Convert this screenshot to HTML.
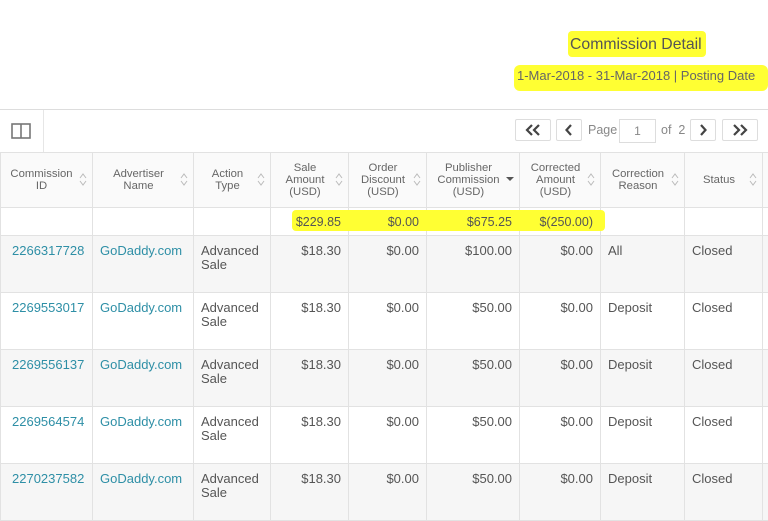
<!DOCTYPE html>
<html><head><meta charset="utf-8"><style>
*{margin:0;padding:0;box-sizing:border-box}
body{width:768px;height:501px;overflow:hidden;background:#fff;font-family:"Liberation Sans",sans-serif;position:relative;color:#555}
.abs{position:absolute}
table{position:absolute;left:0;top:152px;border-collapse:collapse;table-layout:fixed;width:770px}
td,th{border:1px solid #e2e2e2;vertical-align:top;font-size:13px;font-weight:normal;padding:0 7px}
td:first-child{padding-left:11px;padding-right:4px}
th{height:55px;vertical-align:middle;font-size:11.3px;color:#666;text-align:center;position:relative;line-height:12px;padding-right:16px;background:#fafafa}
th:first-child{padding-left:4px;padding-right:14px}
th .s{position:absolute;right:5px;top:19px;width:8px;height:14px}
tr.tot td{height:28px;vertical-align:middle;text-align:right;color:#555;font-size:12.5px}
tr.r td{height:57px;padding-top:8px;line-height:14px}
tr.g td{background:#f6f6f6}
.lk{color:#2e8fa6}
.rt{text-align:right}
.btn{position:absolute;top:119px;height:22px;border:1px solid #ddd;border-radius:2px;background:#fff}
.btn svg{position:absolute;left:50%;top:50%;transform:translate(-50%,-50%)}
</style></head><body>
<div class="abs" style="left:568px;top:31px;width:138px;height:26px;background:#ffff33;border-radius:4px"></div>
<div class="abs" style="left:514px;top:65px;width:254px;height:26px;background:#ffff33;border-radius:6px"></div>
<div class="abs" style="left:570px;top:36px;font-size:15.8px;color:#555">Commission Detail</div>
<div class="abs" style="left:517px;top:68px;font-size:13px;color:#666">1-Mar-2018 - 31-Mar-2018 | Posting Date</div>
<div class="abs" style="left:0;top:109px;width:768px;height:1px;background:#ddd"></div>
<div class="abs" style="left:43px;top:110px;width:1px;height:42px;background:#e6e6e6"></div>
<svg class="abs" style="left:11px;top:123px" width="20" height="16"><rect x="1" y="1" width="18" height="14" fill="none" stroke="#777" stroke-width="1.6"/><line x1="10" y1="1" x2="10" y2="15" stroke="#777" stroke-width="1.6"/></svg>
<div class="btn" style="left:515px;width:36px"><svg width="16" height="12"><path d="M7 1L2 6L7 11M14 1L9 6L14 11" fill="none" stroke="#444" stroke-width="2.2"/></svg></div>
<div class="btn" style="left:556px;width:26px"><svg width="8" height="12"><path d="M6 1L1.5 6L6 11" fill="none" stroke="#444" stroke-width="2.2"/></svg></div>
<div class="abs" style="left:588px;top:123px;font-size:12.5px;color:#888">Page</div>
<div class="abs" style="left:619px;top:119px;width:37px;height:24px;border:1px solid #ddd;font-size:12px;color:#888;text-align:center;line-height:22px">1</div>
<div class="abs" style="left:661px;top:123px;font-size:12.5px;color:#888">of &nbsp;2</div>
<div class="btn" style="left:690px;width:26px"><svg width="8" height="12"><path d="M2 1L6.5 6L2 11" fill="none" stroke="#444" stroke-width="2.2"/></svg></div>
<div class="btn" style="left:722px;width:36px"><svg width="16" height="12"><path d="M2 1L7 6L2 11M9 1L14 6L9 11" fill="none" stroke="#444" stroke-width="2.2"/></svg></div>
<div class="abs" style="left:292px;top:210px;width:313px;height:21px;background:#ffff33;border-radius:4px;z-index:1"></div>
<table>
<colgroup><col style="width:92px"><col style="width:101px"><col style="width:77px"><col style="width:78px"><col style="width:78px"><col style="width:93px"><col style="width:81px"><col style="width:84px"><col style="width:78px"><col style="width:8px"></colgroup>
<tr><th>Commission ID<svg class="s"><path d="M1 6L4 2L7 6M1 9L4 13L7 9" fill="none" stroke="#bbb"/></svg></th><th>Advertiser Name<svg class="s"><path d="M1 6L4 2L7 6M1 9L4 13L7 9" fill="none" stroke="#bbb"/></svg></th><th>Action Type<svg class="s"><path d="M1 6L4 2L7 6M1 9L4 13L7 9" fill="none" stroke="#bbb"/></svg></th><th>Sale Amount (USD)<svg class="s"><path d="M1 6L4 2L7 6M1 9L4 13L7 9" fill="none" stroke="#bbb"/></svg></th><th>Order Discount (USD)<svg class="s"><path d="M1 6L4 2L7 6M1 9L4 13L7 9" fill="none" stroke="#bbb"/></svg></th><th>Publisher Commission (USD)<svg class="s"><path d="M0 5L8 5L4 9Z" fill="#555"/></svg></th><th>Corrected Amount (USD)<svg class="s"><path d="M1 6L4 2L7 6M1 9L4 13L7 9" fill="none" stroke="#bbb"/></svg></th><th>Correction Reason<svg class="s"><path d="M1 6L4 2L7 6M1 9L4 13L7 9" fill="none" stroke="#bbb"/></svg></th><th>Status<svg class="s"><path d="M1 6L4 2L7 6M1 9L4 13L7 9" fill="none" stroke="#bbb"/></svg></th><th></th></tr>
<tr class="tot"><td></td><td></td><td></td><td style="position:relative;z-index:2">$229.85</td><td style="position:relative;z-index:2">$0.00</td><td style="position:relative;z-index:2">$675.25</td><td style="position:relative;z-index:2">$(250.00)</td><td></td><td></td><td></td></tr>
<tr class="r g"><td class="lk">2266317728</td><td class="lk">GoDaddy.com</td><td>Advanced Sale</td><td class="rt">$18.30</td><td class="rt">$0.00</td><td class="rt">$100.00</td><td class="rt">$0.00</td><td>All</td><td>Closed</td><td></td></tr>
<tr class="r"><td class="lk">2269553017</td><td class="lk">GoDaddy.com</td><td>Advanced Sale</td><td class="rt">$18.30</td><td class="rt">$0.00</td><td class="rt">$50.00</td><td class="rt">$0.00</td><td>Deposit</td><td>Closed</td><td></td></tr>
<tr class="r g"><td class="lk">2269556137</td><td class="lk">GoDaddy.com</td><td>Advanced Sale</td><td class="rt">$18.30</td><td class="rt">$0.00</td><td class="rt">$50.00</td><td class="rt">$0.00</td><td>Deposit</td><td>Closed</td><td></td></tr>
<tr class="r"><td class="lk">2269564574</td><td class="lk">GoDaddy.com</td><td>Advanced Sale</td><td class="rt">$18.30</td><td class="rt">$0.00</td><td class="rt">$50.00</td><td class="rt">$0.00</td><td>Deposit</td><td>Closed</td><td></td></tr>
<tr class="r g"><td class="lk">2270237582</td><td class="lk">GoDaddy.com</td><td>Advanced Sale</td><td class="rt">$18.30</td><td class="rt">$0.00</td><td class="rt">$50.00</td><td class="rt">$0.00</td><td>Deposit</td><td>Closed</td><td></td></tr>
</table>
</body></html>
